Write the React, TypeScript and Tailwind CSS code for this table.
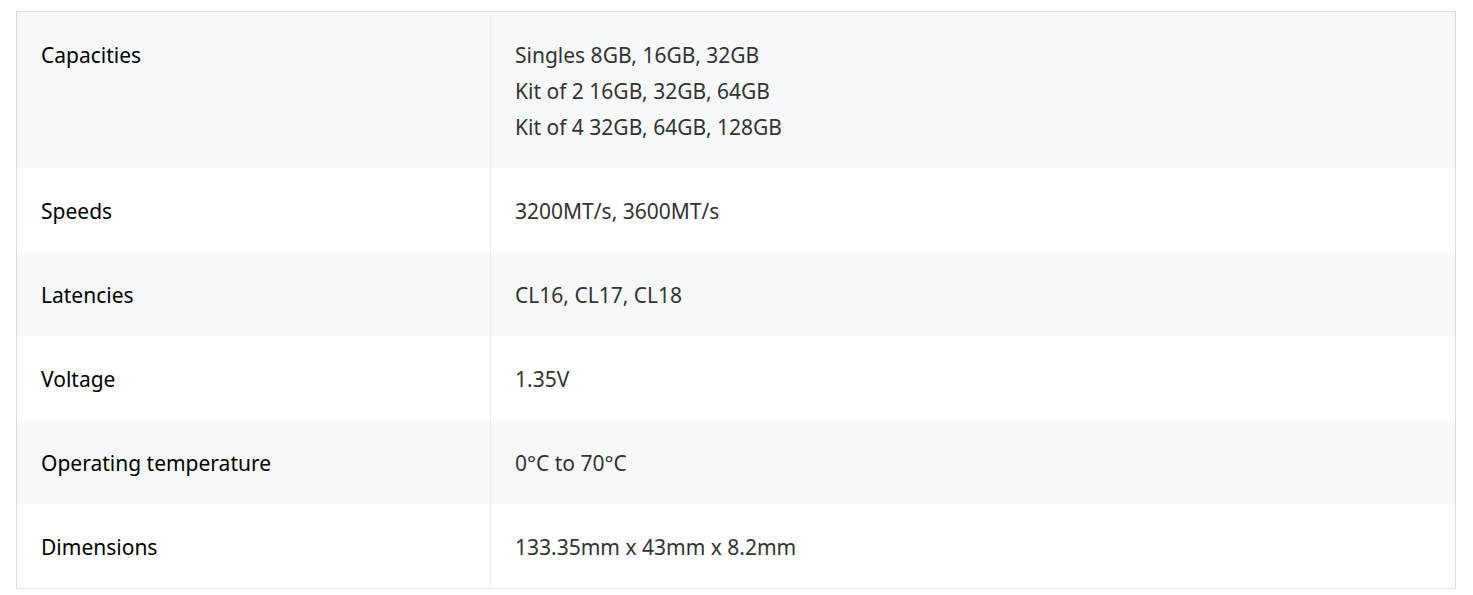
import React from "react";

const specs: { label: string; values: string[] }[] = [
  {
    label: "Capacities",
    values: [
      "Singles 8GB, 16GB, 32GB",
      "Kit of 2 16GB, 32GB, 64GB",
      "Kit of 4 32GB, 64GB, 128GB",
    ],
  },
  { label: "Speeds", values: ["3200MT/s, 3600MT/s"] },
  { label: "Latencies", values: ["CL16, CL17, CL18"] },
  { label: "Voltage", values: ["1.35V"] },
  { label: "Operating temperature", values: ["0°C to 70°C"] },
  { label: "Dimensions", values: ["133.35mm x 43mm x 8.2mm"] },
];

export default function App() {
  return (
    <div className="bg-white min-h-[595px] pt-[11px] pl-4 font-['Noto_Sans',sans-serif]">
      <table className="w-[1440px] border-collapse border border-[#dcdcdc] border-b-[#ebebeb] text-[21px] leading-9">
        <tbody>
          {specs.map((row, index) => (
            <tr
              key={row.label}
              className={index % 2 === 0 ? "bg-[#f7f8fa]" : "bg-white"}
            >
              <td className="w-[474px] align-top px-6 pt-[25px] pb-[23px] text-black">
                {row.label}
              </td>
              <td className="align-top px-6 pt-[25px] pb-[23px] text-[#333] border-l border-[#eeeeee]">
                {row.values.map((value) => (
                  <div key={value}>{value}</div>
                ))}
              </td>
            </tr>
          ))}
        </tbody>
      </table>
    </div>
  );
}
